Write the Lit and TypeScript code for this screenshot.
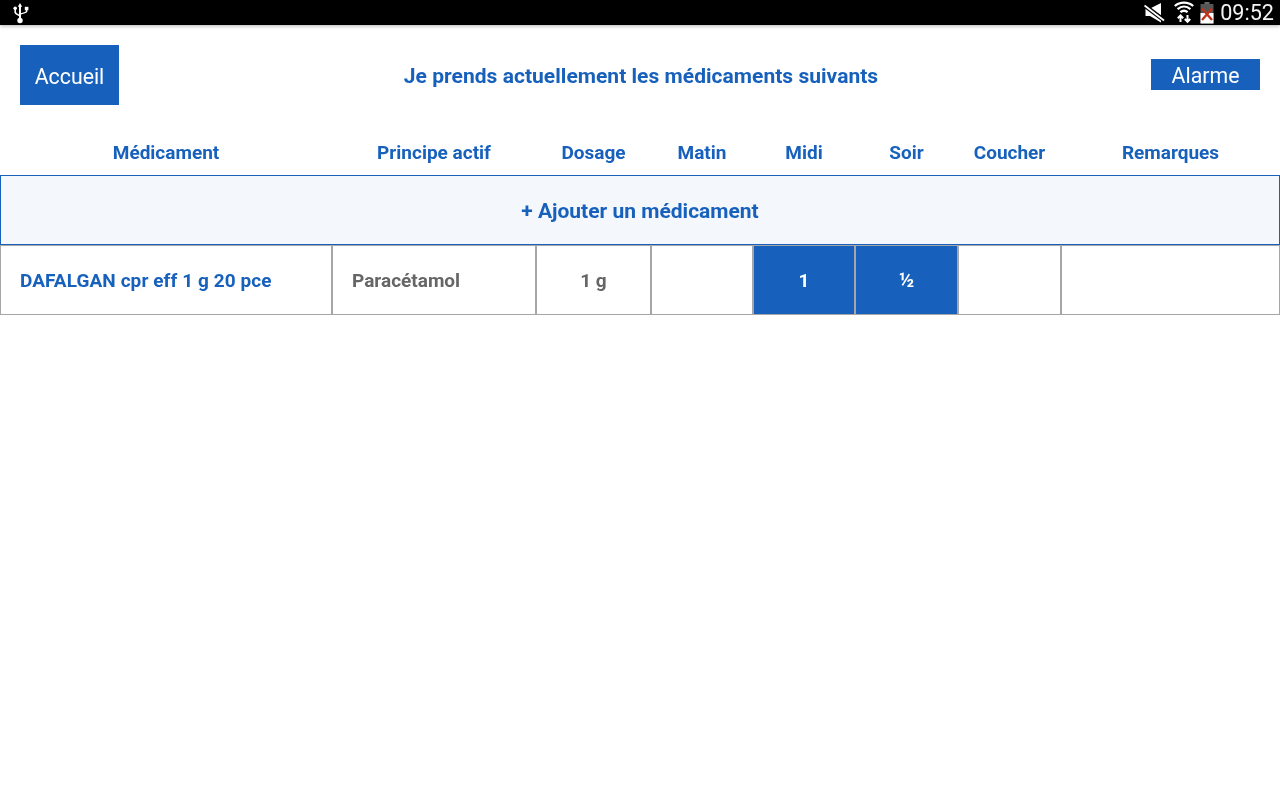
import { LitElement, html, css } from "lit";
import { customElement } from "lit/decorators.js";

const BLUE = css`#1761bd`;

@customElement("app-root")
export class AppRoot extends LitElement {
  static styles = css`
    :host { display: block; width: 1280px; height: 800px; font-family: Roboto, "Liberation Sans", sans-serif; overflow: hidden; will-change: transform; }
    .status { height: 25px; background: #000; display: flex; align-items: center; padding: 0 6px 0 11px; box-shadow: 0 1px 4px rgba(0,0,0,.3); position: relative; color: #fff; }
    .status svg { display: block; flex: none; }
    .spacer { flex: 1; }
    .mute { margin-right: 8px; }
    .wifi { margin-right: 6px; }
    .clock { font-size: 21.6px; font-weight: 400; line-height: 25px; margin-left: 6px; color: #f4f4f4; }
    .top { display: grid; grid-template-columns: 1fr auto 1fr; align-items: center; height: 60px; margin: 20px 20px 0; }
    .btn { background: ${BLUE}; color: #fff; font-size: 21.3px; display: flex; align-items: center; justify-content: center; box-sizing: border-box; }
    .home { width: 99px; height: 60px; padding-top: 2px; }
    .alarm { width: 109px; height: 31px; justify-self: end; margin-bottom: 2px; padding-top: 3px; }
    .title { color: ${BLUE}; font-size: 21px; letter-spacing: .03px; font-weight: 700; margin-left: 2px; padding-top: 2px; }
    .grid { display: grid; grid-template-columns: 332px 204px 115px 102px 102px 103px 103px 219px; }
    .heads { margin-top: 30px; height: 40px; padding-bottom: 6px; box-sizing: border-box; align-items: center; }
    .head { color: ${BLUE}; font-size: 19px; font-weight: 700; text-align: center; }
    .add { height: 70px; box-sizing: border-box; border: 1px solid ${BLUE}; padding-top: 1px; background: #f4f7fc; color: ${BLUE}; font-size: 21px; font-weight: 700; display: flex; align-items: center; justify-content: center; }
    .row { height: 70px; }
    .cell { box-sizing: border-box; border: 1px solid #a6a6a6; color: #666; font-size: 19px; font-weight: 700; display: flex; align-items: center; justify-content: center; }
    .name { color: ${BLUE}; justify-content: flex-start; padding-left: 19px; letter-spacing: .08px; }
    .sub { justify-content: flex-start; padding-left: 19px; }
    .on { background: ${BLUE}; color: #fff; }
    .frac { font-size: 20px; }
  `;

  private usb() {
    return html`<svg width="18" height="22" viewBox="0 0 18 22" fill="#fff">
      <path d="M9 1 L11.2 4.8 H10 V17 H8 V4.8 H6.8 Z"/>
      <circle cx="9" cy="18.5" r="2.7"/>
      <path d="M3.4 7 V10 C3.4 12 5 12.7 9 14.6 V12.9 C6.2 11.6 5 11 5 9.8 V7 Z"/>
      <circle cx="4.2" cy="6.2" r="1.8"/>
      <path d="M16.4 8 V9.6 C16.4 10.8 14 11.4 9 13 V11.4 C12.6 10.2 14.8 9.9 14.8 9.2 V8 Z"/>
      <rect x="13.8" y="4.8" width="3.6" height="3.4"/>
    </svg>`;
  }
  private mute() {
    return html`<svg class="mute" width="22" height="22" viewBox="0 0 22 22" fill="#fff">
      <path d="M1.5 6.5 V14 H6 L17 20.5 V1 L6 6.5 Z"/>
      <path d="M0 3 L21 19" stroke="#000" stroke-width="4.2"/>
      <path d="M0.5 3.5 L20 18.5" stroke="#fff" stroke-width="1.8"/>
    </svg>`;
  }
  private wifi() {
    return html`<svg class="wifi" width="20" height="23" viewBox="0 0 20 23" fill="none" stroke="#fff">
      <path d="M0.8 5 C6 0.4 14 0.4 19.2 5" stroke-width="2.3"/>
      <path d="M3.6 8.2 C7.5 4.8 12.5 4.8 16.4 8.2" stroke-width="2.3"/>
      <path d="M6.4 11.2 C8.6 9.4 11.4 9.4 13.6 11.2" stroke-width="2.3"/>
      <path d="M6.5 21 V15 M3.8 17.2 L6.5 14.4 L9.2 17.2" stroke-width="2"/>
      <path d="M13.5 14 V20 M10.8 18 L13.5 20.8 L16.2 18" stroke-width="2"/>
    </svg>`;
  }
  private battery() {
    return html`<svg width="14" height="22" viewBox="0 0 14 22">
      <rect x="4.5" y="0" width="5" height="2" fill="#666"/>
      <rect x="0.5" y="2" width="13" height="19.5" fill="#555"/>
      <rect x="0.5" y="11" width="13" height="10.5" fill="#fff"/>
      <path d="M2 6.5 L12 18 M12 6.5 L2 18" stroke="#c1331a" stroke-width="2.4"/>
    </svg>`;
  }

  render() {
    const heads = ["Médicament", "Principe actif", "Dosage", "Matin", "Midi", "Soir", "Coucher", "Remarques"];
    return html`
      <div class="status">
        ${this.usb()}
        <div class="spacer"></div>
        ${this.mute()}${this.wifi()}${this.battery()}
        <span class="clock">09:52</span>
      </div>
      <div class="top">
        <div class="btn home">Accueil</div>
        <div class="title">Je prends actuellement les médicaments suivants</div>
        <div class="btn alarm">Alarme</div>
      </div>
      <div class="grid heads">${heads.map((h) => html`<div class="head">${h}</div>`)}</div>
      <div class="add">+ Ajouter un médicament</div>
      <div class="grid row">
        <div class="cell name">DAFALGAN cpr eff 1 g 20 pce</div>
        <div class="cell sub">Paracétamol</div>
        <div class="cell">1 g</div>
        <div class="cell"></div>
        <div class="cell on">1</div>
        <div class="cell on frac">½</div>
        <div class="cell"></div>
        <div class="cell"></div>
      </div>
    `;
  }
}
